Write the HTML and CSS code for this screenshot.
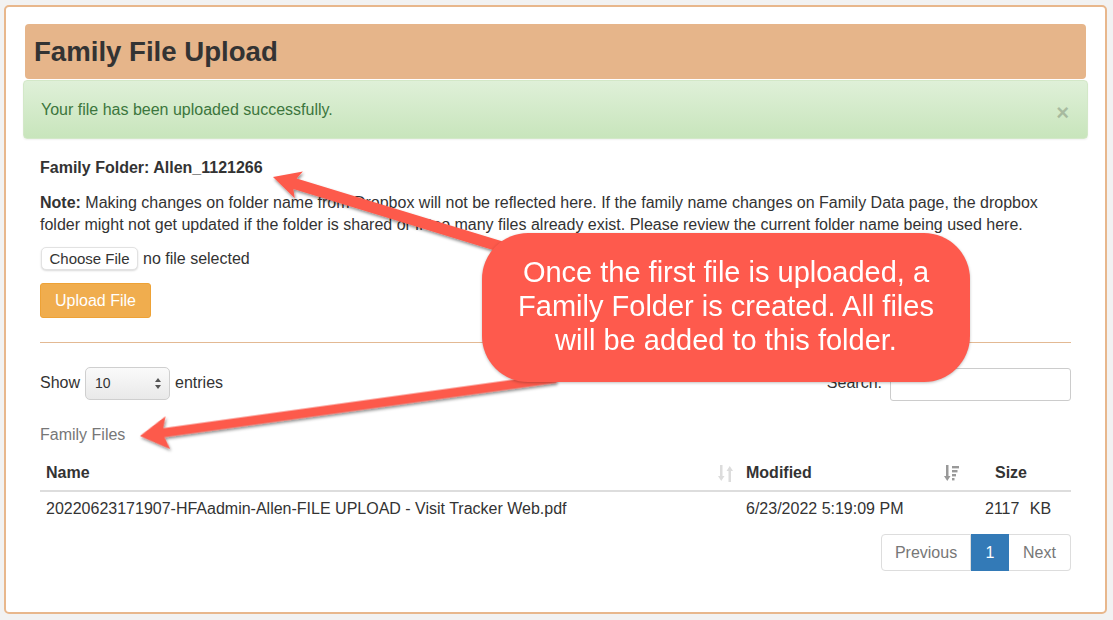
FILE: index.html
```html
<!DOCTYPE html>
<html lang="en">
<head>
    <meta charset="UTF-8">
    <title>Family File Upload</title>
    <link rel="stylesheet" href="styles.css">
</head>
<body>

    <div class="panel">
        <div class="panel-title">
            <h1>Family File Upload</h1>
        </div>

        <div class="alert">
            <span>Your file has been uploaded successfully.</span>
            <span class="close">&times;</span>
        </div>

        <div class="panel-body">
            <p class="folder">Family Folder: Allen_1121266</p>
            <p class="note"><b>Note:</b> Making changes on folder name from Dropbox will not be reflected here. If the family name changes on Family Data page, the dropbox folder might not get updated if the folder is shared or if too many files already exist. Please review the current folder name being used here.</p>

            <div class="file-row">
                <button class="choose">Choose File</button>
                <span>no file selected</span>
            </div>
            <button class="upload">Upload File</button>

            <hr>

            <div class="dt-top">
                <label class="length">Show
                    <span class="select">10
                        <svg width="6" height="11" viewBox="0 0 6 11"><path d="M3 0 L6 4 L0 4 Z M3 11 L6 7 L0 7 Z" fill="#555"/></svg>
                    </span>
                    entries</label>
                <label class="search">Search: <span class="search-box"></span></label>
            </div>

            <table>
                <caption>Family Files</caption>
                <thead>
                    <tr>
                        <th class="col-name">Name
                            <svg class="sort" width="15" height="17" viewBox="0 0 15 17"><path d="M2 0 H4.5 V11 H6.5 L3.25 16 L0 11 H2 Z M10.5 17 H13 V6 H15 L11.75 1 L8.5 6 H10.5 Z" fill="#dcdcdc"/></svg>
                        </th>
                        <th class="col-mod">Modified
                            <svg class="sort" width="16" height="17" viewBox="0 0 16 17"><path d="M2 0 H4.5 V11 H6.5 L3.25 16 L0 11 H2 Z" fill="#999"/><rect x="8" y="1" width="7" height="2.4" fill="#999"/><rect x="8" y="5" width="5.5" height="2.4" fill="#999"/><rect x="8" y="9" width="4" height="2.4" fill="#999"/><rect x="8" y="13" width="2.5" height="2.4" fill="#999"/></svg>
                        </th>
                        <th class="col-size">Size</th>
                    </tr>
                </thead>
                <tbody>
                    <tr>
                        <td>20220623171907-HFAadmin-Allen-FILE UPLOAD - Visit Tracker Web.pdf</td>
                        <td>6/23/2022 5:19:09 PM</td>
                        <td class="size">2117 <span class="unit">KB</span></td>
                    </tr>
                </tbody>
            </table>

            <div class="pager">
                <a class="prev">Previous</a>
                <a class="current">1</a>
                <a class="next">Next</a>
            </div>
        </div>
    </div>

    <!-- annotation layer -->
    <svg class="arrows" width="1113" height="620" viewBox="0 0 1113 620">
        <defs>
            <filter id="shade" x="-10%" y="-30%" width="120%" height="160%">
                <feDropShadow dx="1" dy="2" stdDeviation="1.5" flood-color="#000" flood-opacity="0.45"/>
            </filter>
        </defs>
        <g filter="url(#shade)" fill="#fd5a4c">
            <path transform="translate(273 177) rotate(17)" d="M0 0 L27 -14 L23 -5.5 L260 -5.5 L260 5.5 L23 5.5 L27 14 Z"/>
            <path transform="translate(140 436) rotate(-7.9)" d="M0 0 L28 -16 L24 -4.5 L420 -4.5 L420 4.5 L24 4.5 L28 17 Z"/>
        </g>
    </svg>

    <div class="callout">
        Once the first file is uploaded, a<br>
        Family Folder is created. All files<br>
        will be added to this folder.
    </div>

</body>
</html>
```

FILE: styles.css
```css
body {
    margin: 0;
    background-color: #f2f2f2;
    font-family: 'Liberation Sans', Helvetica, Arial, sans-serif;
    font-size: 16px;
    color: #333;
    position: relative;
    width: 1113px;
    height: 620px;
    overflow: hidden;
}

.panel {
    box-sizing: border-box;
    margin: 5px 6px 0 4px;
    height: 609px;
    padding: 17px;
    background-color: white;
    border: 2px solid #e8b78c;
    border-radius: 5px;
}

.panel-title {
    margin: 0 2px;
    height: 55px;
    background-color: #e6b58a;
    border-radius: 4px;
}

.panel-title h1 {
    margin: 0;
    padding-left: 9px;
    font-size: 27.6px;
    line-height: 56px;
    font-weight: 700;
    color: #333;
}

.alert {
    box-sizing: border-box;
    margin-top: 1px;
    height: 59px;
    padding: 0 18px 0 17px;
    display: flex;
    align-items: center;
    justify-content: space-between;
    color: #3c763d;
    background: linear-gradient(#dff0d8, #c8e5bc);
    border: 1px solid #d3e8c8;
    border-radius: 4px;
    box-shadow: 0 1px 2px rgba(0, 0, 0, 0.06);
}

.alert .close {
    font-size: 22px;
    font-weight: 700;
    color: #000;
    opacity: 0.2;
    margin-top: 6px;
}

.panel-body {
    padding: 0 17px;
    line-height: 22px;
}

.folder {
    margin: 18px 0 0;
    font-weight: 700;
}

.note {
    margin: 13px 0 0;
}

.file-row {
    margin-top: 11px;
    display: flex;
    align-items: center;
    gap: 5px;
}

.choose {
    box-sizing: border-box;
    height: 23px;
    width: 97px;
    margin-left: 1px;
    padding: 0;
    font-family: inherit;
    font-size: 15px;
    color: #333;
    background-color: white;
    border: 1px solid #e2e2e2;
    border-radius: 5px;
    box-shadow: 0 1px 2px rgba(0, 0, 0, 0.15);
}

.upload {
    display: block;
    margin-top: 13px;
    height: 35px;
    width: 111px;
    padding: 0;
    font-family: inherit;
    font-size: 16px;
    color: white;
    background-color: #f0ad4e;
    border: 1px solid #eea236;
    border-radius: 3px;
}

hr {
    margin: 24px 0 0;
    border: none;
    border-top: 1px solid #e3b993;
}

.dt-top {
    margin-top: 23px;
    display: flex;
    justify-content: space-between;
    align-items: center;
    height: 34px;
}

.length, .search {
    display: flex;
    align-items: center;
    gap: 5px;
}

.select {
    box-sizing: border-box;
    width: 85px;
    height: 33px;
    padding: 0 8px 0 9px;
    display: flex;
    align-items: center;
    justify-content: space-between;
    font-size: 14px;
    background: linear-gradient(#fafafa, #e9e9e9);
    border: 1px solid #cfcfcf;
    border-radius: 5px;
}

.search {
    gap: 8px;
}

.search-box {
    box-sizing: border-box;
    width: 181px;
    height: 33px;
    margin-top: 2px;
    border: 1px solid #cccccc;
    border-radius: 3px;
}

table {
    width: 100%;
    border-collapse: collapse;
    margin-top: 1px;
}

caption {
    text-align: left;
    color: #777;
    padding: 23px 0 8px;
    line-height: 22px;
}

th, td {
    text-align: left;
    padding: 7px 6px;
    line-height: 22px;
}

th {
    font-size: 16px;
    padding-top: 8px;
    padding-bottom: 6px;
    border-bottom: 2px solid #dddddd;
}

td {
    padding-top: 6px;
    padding-bottom: 6px;
}

.col-name {
    width: 688px;
}

.col-mod {
    width: 214px;
}

.sort {
    float: right;
    margin-top: 3px;
}

.col-name .sort {
    margin-right: 1px;
}

.col-size {
    padding-left: 29px;
}

td.size {
    padding-left: 19px;
}

.unit {
    margin-left: 6px;
}

.pager {
    margin-top: 8px;
    display: flex;
    justify-content: flex-end;
}

.pager a {
    box-sizing: border-box;
    height: 37px;
    line-height: 35px;
    color: #777;
    border: 1px solid #dddddd;
    text-align: center;
}

.pager .prev {
    width: 90px;
    border-radius: 4px 0 0 4px;
}

.pager .current {
    width: 38px;
    color: white;
    background-color: #337ab7;
    border-color: #337ab7;
}

.pager .next {
    width: 62px;
    border-left: none;
    border-radius: 0 4px 4px 0;
}

.arrows {
    position: absolute;
    left: 0;
    top: 0;
    pointer-events: none;
}

.callout {
    position: absolute;
    left: 482px;
    top: 233px;
    box-sizing: border-box;
    width: 488px;
    height: 149px;
    padding: 22px 0 0;
    background-color: #fe5a4d;
    border-radius: 46px;
    color: white;
    font-size: 29px;
    line-height: 34px;
    text-align: center;
    box-shadow: 0 1px 3px rgba(0, 0, 0, 0.25);
}
```
